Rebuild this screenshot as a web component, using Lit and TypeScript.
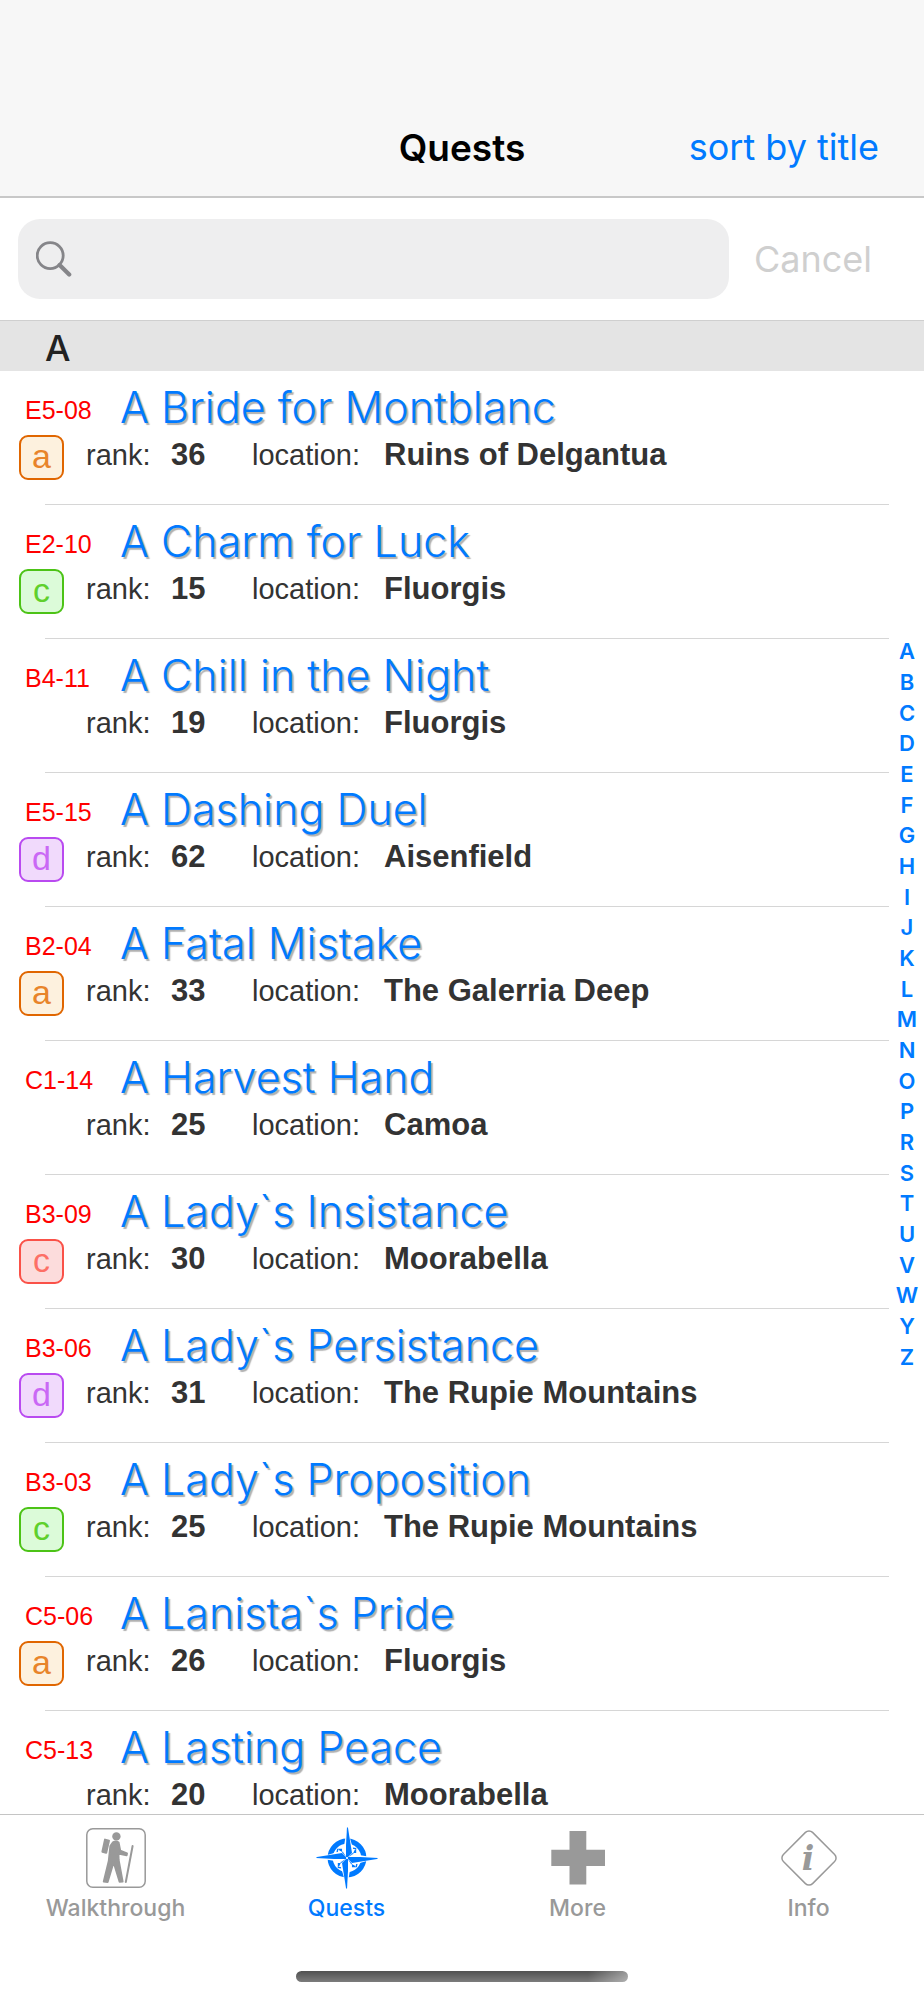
import { LitElement, html, css, svg, nothing } from "lit";
import { customElement, property, state } from "lit/decorators.js";
import { classMap } from "lit/directives/class-map.js";

interface Quest {
  code: string;
  title: string;
  rank: number;
  location: string;
  badge?: { letter: string; tone: "orange" | "green" | "purple" | "red" };
}

const QUESTS: Quest[] = [
  { code: "E5-08", title: "A Bride for Montblanc", rank: 36, location: "Ruins of Delgantua", badge: { letter: "a", tone: "orange" } },
  { code: "E2-10", title: "A Charm for Luck", rank: 15, location: "Fluorgis", badge: { letter: "c", tone: "green" } },
  { code: "B4-11", title: "A Chill in the Night", rank: 19, location: "Fluorgis" },
  { code: "E5-15", title: "A Dashing Duel", rank: 62, location: "Aisenfield", badge: { letter: "d", tone: "purple" } },
  { code: "B2-04", title: "A Fatal Mistake", rank: 33, location: "The Galerria Deep", badge: { letter: "a", tone: "orange" } },
  { code: "C1-14", title: "A Harvest Hand", rank: 25, location: "Camoa" },
  { code: "B3-09", title: "A Lady`s Insistance", rank: 30, location: "Moorabella", badge: { letter: "c", tone: "red" } },
  { code: "B3-06", title: "A Lady`s Persistance", rank: 31, location: "The Rupie Mountains", badge: { letter: "d", tone: "purple" } },
  { code: "B3-03", title: "A Lady`s Proposition", rank: 25, location: "The Rupie Mountains", badge: { letter: "c", tone: "green" } },
  { code: "C5-06", title: "A Lanista`s Pride", rank: 26, location: "Fluorgis", badge: { letter: "a", tone: "orange" } },
  { code: "C5-13", title: "A Lasting Peace", rank: 20, location: "Moorabella" },
];

const LETTERS = [..."ABCDEFGHIJKLMNOPRSTUVWYZ"];

const needle = (angle: number) => svg`
  <g transform="rotate(${angle})">
    <path d="M0 -30 L-4 -6 L0 0 L7 -6 Z" fill="#fff"/>
    <path d="M-1 -13 L-1 -1 L0 0 L5 -5 L1 -30 L0 -31 L-1 -13 Z" fill="currentColor"/>
  </g>`;

const barb = (angle: number) => svg`
  <g transform="rotate(${angle})">
    <path d="M0 -1 L0 -13 L3 -10 L1 -8 L3 -6 Z" fill="currentColor"/>
    <path d="M0 -13 L-3 -11" stroke="currentColor" stroke-width="1.4" fill="none"/>
  </g>`;

const ICONS = {
  walk: svg`<svg viewBox="0 0 60 60" width="60" height="60" aria-hidden="true">
    <rect x="0.8" y="0.8" width="58.4" height="58.4" rx="6" fill="none" stroke="currentColor" stroke-width="1.5"/>
    <g fill="currentColor" stroke="currentColor" stroke-linejoin="round" stroke-linecap="round">
      <circle cx="30.4" cy="8.4" r="4.2" stroke="none"/>
      <path d="M19 11.6 L23 12.6 L20.2 24.8 L16.4 23.8 Z" stroke-width="2"/>
      <path d="M27 14.4 Q30 12.6 32.6 14.6 L34.2 22.8 L41 25.4 L40.6 27.2 L32.4 25.6 L32.6 32 L36.6 53.6 L33.6 53.8 L27.6 34 L21.6 54 L17.8 53.6 L22.8 33 L24.4 18 Z" stroke-width="2"/>
      <path d="M46.6 18 L39.8 54" stroke-width="2" fill="none"/>
    </g>
  </svg>`,
  compass: svg`<svg viewBox="-31 -31 62 62" width="62" height="62" aria-hidden="true">
    <circle r="16.8" fill="none" stroke="currentColor" stroke-width="5.2"/>
    ${[45, 135, 225, 315].map(barb)}
    ${[0, 90, 180, 270].map(needle)}
    <circle r="1" fill="#fff"/>
  </svg>`,
  plus: svg`<svg viewBox="0 0 54 54" width="54" height="54" aria-hidden="true">
    <path d="M18.5 0 H35.3 V18.8 H54 V35 H35.3 V53.5 H18.5 V35 H0.3 V18.8 H18.5 Z" fill="currentColor"/>
  </svg>`,
  info: svg`<svg viewBox="-29 -29 58 58" width="58" height="58" aria-hidden="true">
    <rect x="-20.6" y="-20.6" width="41.2" height="41.2" rx="5" transform="rotate(45)" fill="none" stroke="currentColor" stroke-width="1.5"/>
    <text x="-1" y="12" text-anchor="middle" font-family="DejaVu Serif" font-weight="700" font-style="italic" font-size="33" fill="currentColor">i</text>
  </svg>`,
};

@customElement("quest-row")
export class QuestRow extends LitElement {
  @property({ attribute: false }) quest!: Quest;

  static styles = css`
    :host {
      display: block;
      box-sizing: border-box;
      height: 134px;
      font-family: "Liberation Sans", Arial, sans-serif;
    }
    .row {
      box-sizing: border-box;
      height: 100%;
      padding: 8px 0 0 19px;
      display: flex;
      flex-direction: column;
    }
    .heading {
      display: grid;
      grid-template-columns: 96px 1fr;
      padding-left: 5px;
      align-items: center;
    }
    .code {
      color: #ff0000;
      font-size: 25px;
      line-height: 56px;
      padding: 3px 0 0 1px;
      height: 53px;
    }
    .title {
      color: #007aff;
      font-family: Inter, "Helvetica Neue", sans-serif;
      font-weight: 300;
      font-size: 43px;
      line-height: 56px;
      text-decoration: none;
      text-shadow: 2px 2px 1px #b0b0b0;
      white-space: nowrap;
    }
    .details {
      display: grid;
      grid-template-columns: 67px 1fr;
    }
    .badge {
      box-sizing: border-box;
      width: 45px;
      height: 45px;
      border: 2px solid currentColor;
      border-radius: 9px;
      font-size: 34px;
      line-height: 38px;
      text-align: center;
    }
    .orange { color: #e8842a; border-color: #e06600; background: #fdf1de; }
    .green { color: #5fd02c; border-color: #4cc316; background: #dcfbd9; }
    .purple { color: #ca68f5; border-color: #b94af0; background: #f1dafc; }
    .red { color: #fd6f66; border-color: #fa5148; background: #fcdcdc; }
    .facts {
      grid-column: 2;
      margin: 0;
      display: grid;
      grid-template-columns: 85px 81px 132px 1fr;
      align-items: baseline;
      height: 40px;
      line-height: 40px;
      color: #333;
      white-space: nowrap;
    }
    dt { font-size: 29px; }
    dd { margin: 0; font-size: 31px; font-weight: 700; }
    .rule {
      height: 1px;
      margin: auto 35px 0 26px;
      background: #d6d6d6;
    }
  `;

  render() {
    const { code, title, rank, location, badge } = this.quest;
    return html`
      <article class="row">
        <div class="heading">
          <span class="code">${code}</span>
          <a class="title" href="#${code}">${title}</a>
        </div>
        <div class="details">
          ${badge ? html`<span class="badge ${badge.tone}">${badge.letter}</span>` : nothing}
          <dl class="facts">
            <dt>rank:</dt><dd>${rank}</dd>
            <dt>location:</dt><dd>${location}</dd>
          </dl>
        </div>
        <div class="rule"></div>
      </article>
    `;
  }
}

@customElement("app-root")
export class AppRoot extends LitElement {
  @state() private active = "Quests";

  static styles = css`
    :host {
      display: flex;
      flex-direction: column;
      height: 100vh;
      overflow: hidden;
      background: #fff;
      font-family: Inter, "Helvetica Neue", sans-serif;
      font-size: 36px;
    }
    button {
      border: 0;
      padding: 0;
      background: none;
      font: inherit;
      color: #007aff;
    }
    .navbar {
      display: grid;
      grid-template-columns: 1fr auto 1fr;
      align-items: center;
      padding: 98px 45px 0;
      height: 98px;
      background: #f7f7f7;
      border-bottom: 2px solid #c8c8c8;
    }
    .navbar h1 {
      grid-column: 2;
      margin: 0;
      font-size: 37px;
      font-weight: 600;
      color: #000;
    }
    .navbar button { justify-self: end; }
    .search {
      display: flex;
      align-items: center;
      padding: 21px 52px 21px 18px;
      gap: 25px;
      border-bottom: 1px solid #cfcfcf;
    }
    .field {
      flex: 1;
      display: flex;
      align-items: center;
      gap: 14px;
      height: 80px;
      padding: 0 18px;
      border-radius: 22px;
      background: #eeeeef;
      color: #858589;
    }
    .field input {
      flex: 1;
      min-width: 0;
      border: 0;
      outline: 0;
      background: none;
      font: inherit;
      color: #000;
    }
    .search button { color: #cfcfcf; }
    .body {
      position: relative;
      flex: 1;
      min-height: 0;
      overflow: hidden;
    }
    .section {
      margin: 0;
      padding-left: 45px;
      height: 50px;
      line-height: 54px;
      background: #e4e4e4;
      color: #222;
      font-size: 36px;
      font-weight: 500;
    }
    .list {
      margin: 0;
      padding: 0;
      list-style: none;
    }
    .index {
      position: absolute;
      top: 315px;
      right: 0;
      height: 736px;
      width: 34px;
      display: flex;
      flex-direction: column;
    }
    .index a {
      flex: 1;
      display: grid;
      place-items: center;
      color: #007aff;
      font-size: 22px;
      line-height: 30px;
      font-weight: 600;
      text-decoration: none;
    }
    .tabs {
      display: grid;
      grid-template-columns: repeat(4, 1fr);
      height: 156px;
      background: #fff;
      border-top: 1px solid #c4c4c4;
    }
    .tab {
      display: flex;
      flex-direction: column;
      align-items: center;
      justify-content: start;
      padding-top: 10px;
      gap: 2px;
      color: #999;
      font-size: 23px;
      font-weight: 500;
      line-height: 30px;
    }
    .tab.active { color: #007aff; }
    .icon {
      height: 66px;
      display: grid;
      place-items: center;
    }
    .home {
      width: 36%;
      height: 11px;
      margin: 0 auto 18px;
      border-radius: 6px;
      background: linear-gradient(90deg, transparent 88%, rgba(255, 255, 255, 0.4)),
        linear-gradient(#505050, #7c7c7c);
    }
  `;

  private tab(label: string, icon: unknown) {
    return html`<button
      class=${classMap({ tab: true, active: this.active === label })}
      @click=${() => (this.active = label)}
    ><span class="icon">${icon}</span><span>${label}</span></button>`;
  }

  render() {
    return html`
      <header class="navbar">
        <h1>Quests</h1>
        <button>sort by title</button>
      </header>
      <form class="search" role="search">
        <label class="field">
          <svg viewBox="0 0 36 38" width="36" height="38" role="img" aria-label="Search">
            <circle cx="14.2" cy="15.6" r="13" fill="none" stroke="currentColor" stroke-width="2.8"/>
            <path d="M23.6 25 L33.2 34.6" stroke="currentColor" stroke-width="4.2" stroke-linecap="round"/>
          </svg>
          <input type="search" aria-label="Search quests" />
        </label>
        <button type="button" disabled>Cancel</button>
      </form>
      <main class="body">
        <h2 class="section">A</h2>
        <ul class="list">
          ${QUESTS.map((q) => html`<li><quest-row .quest=${q}></quest-row></li>`)}
        </ul>
        <nav class="index" aria-label="Jump to letter">
          ${LETTERS.map((l) => html`<a href="#${l}">${l}</a>`)}
        </nav>
      </main>
      <nav class="tabs">
        ${this.tab("Walkthrough", ICONS.walk)}
        ${this.tab("Quests", ICONS.compass)}
        ${this.tab("More", ICONS.plus)}
        ${this.tab("Info", ICONS.info)}
      </nav>
      <div class="home"></div>
    `;
  }
}
